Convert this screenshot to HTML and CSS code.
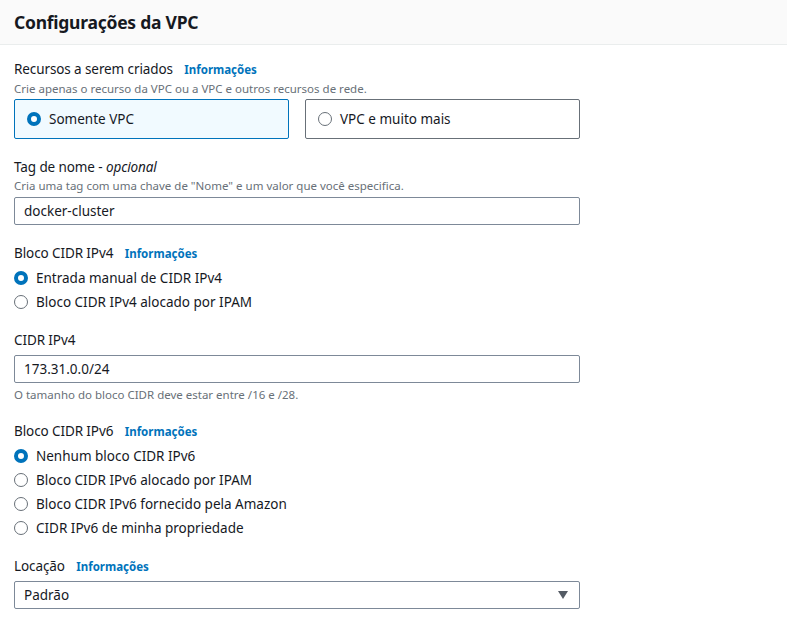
FILE: index.html
```html
<!DOCTYPE html>
<html lang="pt">
<head>
<meta charset="utf-8">
<link rel="stylesheet" href="styles.css">
</head>
<body>
<div class="header"><h2>Configurações da VPC</h2></div>
<div class="form">
  <div class="group">
    <div class="label">Recursos a serem criados <a class="info">Informações</a></div>
    <div class="desc">Crie apenas o recurso da VPC ou a VPC e outros recursos de rede.</div>
    <div class="tiles">
      <div class="tile selected"><span class="radio on"></span>Somente VPC</div>
      <div class="tile"><span class="radio"></span>VPC e muito mais</div>
    </div>
  </div>
  <div class="group g2">
    <div class="label">Tag de nome - <i>opcional</i></div>
    <div class="desc">Cria uma tag com uma chave de "Nome" e um valor que você especifica.</div>
    <div class="input i2">docker-cluster</div>
  </div>
  <div class="group g3">
    <div class="label">Bloco CIDR IPv4 <a class="info">Informações</a></div>
    <div class="radios r1">
      <div class="row"><span class="radio on"></span>Entrada manual de CIDR IPv4</div>
      <div class="row"><span class="radio"></span>Bloco CIDR IPv4 alocado por IPAM</div>
    </div>
  </div>
  <div class="group g4">
    <div class="label">CIDR IPv4</div>
    <div class="input">173.31.0.0/24</div>
    <div class="hint">O tamanho do bloco CIDR deve estar entre /16 e /28.</div>
  </div>
  <div class="group g5">
    <div class="label">Bloco CIDR IPv6 <a class="info">Informações</a></div>
    <div class="radios r2">
      <div class="row"><span class="radio on"></span>Nenhum bloco CIDR IPv6</div>
      <div class="row"><span class="radio"></span>Bloco CIDR IPv6 alocado por IPAM</div>
      <div class="row"><span class="radio"></span>Bloco CIDR IPv6 fornecido pela Amazon</div>
      <div class="row"><span class="radio"></span>CIDR IPv6 de minha propriedade</div>
    </div>
  </div>
  <div class="group g6">
    <div class="label">Locação <a class="info">Informações</a></div>
    <div class="input i6">Padrão<span class="caret"></span></div>
  </div>
</div>
</body>
</html>
```
FILE: styles.css
```css
* { box-sizing: border-box; }
body {
  margin: 0;
  background: #fff;
  font-family: "Noto Sans", "Open Sans", sans-serif;
  color: #16191f;
  font-size: 13.5px;
}
.header {
  height: 45px;
  background: #fafafa;
  border-bottom: 1px solid #eaeded;
  padding: 0 14px;
  display: flex;
  align-items: center;
}
.header h2 {
  margin: 0;
  font-size: 17.5px;
  letter-spacing: -0.25px;
  font-weight: 700;
  line-height: 26px;
  color: #16191f;
}
.form {
  padding: 13px 14px 0 14px;
  width: 594px;
  display: flex;
  flex-direction: column;
  gap: 16px;
}
.g2 { margin-top: 1px; }
.g3 { margin-top: 1px; }
.g4 { margin-top: -1px; }
.g5 { margin-top: 1px; }
.g6 { margin-top: -1px; }
.label {
  line-height: 22px;
  letter-spacing: -0.1px;
}
.info {
  color: #0073bb;
  font-weight: 700;
  font-size: 11.5px;
  letter-spacing: 0;
  margin-left: 8px;
}
.desc, .hint {
  font-size: 11.5px;
  line-height: 16px;
  color: #687078;
}
.hint { margin-top: 4px; }
.tiles {
  margin-top: 2px;
  display: flex;
  gap: 16px;
}
.tile {
  width: 275px;
  height: 40px;
  border: 1px solid #687078;
  border-radius: 2px;
  display: flex;
  align-items: center;
  padding-left: 12px;
  gap: 8px;
}
.tile.selected {
  background: #f1faff;
  border-color: #0073bb;
}
.radio {
  width: 14px;
  height: 14px;
  border-radius: 50%;
  border: 1.5px solid #687078;
  flex: none;
  background: #fff;
}
.radio.on {
  border: 4.5px solid #0073bb;
}
.input {
  margin-top: 4px;
  height: 28px;
  border: 1px solid #7d8998;
  border-radius: 2px;
  display: flex;
  align-items: center;
  justify-content: space-between;
  padding-left: 9px;
  padding-right: 11px;
}
.i2 { margin-top: 3px; }
.i6 { margin-top: 3px; }
.r1 { margin-top: 1px; }
.r2 { margin-top: 1px; }
.row {
  height: 24px;
  display: flex;
  align-items: center;
  gap: 8px;
}
.caret {
  width: 0;
  height: 0;
  border-left: 5.5px solid transparent;
  border-right: 5.5px solid transparent;
  border-top: 8px solid #545b64;
}
```
